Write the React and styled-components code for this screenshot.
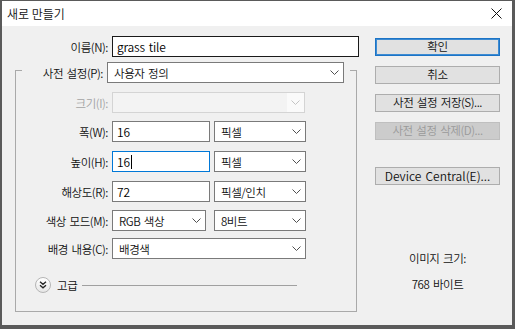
import styled, { createGlobalStyle } from "styled-components";

const GlobalStyle = createGlobalStyle`
  html, body {
    margin: 0;
    padding: 0;
    background: #595959;
  }
  body {
    font-family: "Noto Sans CJK KR", "Noto Sans", sans-serif;
    font-size: 11.5px;
    font-weight: 350;
    letter-spacing: -0.45px;
    word-spacing: 1.5px;
    color: #111;
  }
`;

function Chevron({ disabled }) {
    return (
        <svg width="9" height="5" viewBox="0 0 9 5">
            <polyline
                points="0.5,0.5 4.5,4.5 8.5,0.5"
                fill="none"
                stroke={disabled ? "#c4c4c4" : "#505050"}
                strokeWidth="1"
            />
        </svg>
    );
}

function SelectBox({ width, children, disabled }) {
    return (
        <Select $w={width} $disabled={disabled}>
            <SelectText>{children}</SelectText>
            <ChevronZone $disabled={disabled}>
                <Chevron disabled={disabled} />
            </ChevronZone>
        </Select>
    );
}

function App() {
    return (
        <>
            <GlobalStyle />
            <Window>
                <TitleBar>
                    <Title>새로 만들기</Title>
                    <CloseButton>
                        <svg width="11" height="11" viewBox="0 0 11 11">
                            <path d="M0.5 0.5 L10.5 10.5 M10.5 0.5 L0.5 10.5" stroke="#111" strokeWidth="1" />
                        </svg>
                    </CloseButton>
                </TitleBar>
                <Body>
                    <FormColumn>
                        <Row>
                            <Label $w={106}>이름(N):</Label>
                            <TextInput $w={247} $border="#1a1a1a">grass tile</TextInput>
                        </Row>
                        <Group>
                            <Legend>
                                <Label $w={81}>사전 설정(P):</Label>
                                <SelectBox width={237}>사용자 정의</SelectBox>
                            </Legend>
                            <Row>
                                <Label $w={92} $disabled>크기(I):</Label>
                                <SelectBox width={193} disabled />
                            </Row>
                            <Row $mt={8}>
                                <Label $w={92}>폭(W):</Label>
                                <TextInput $w={98}>16</TextInput>
                                <Spacer $w={4} />
                                <SelectBox width={92}>픽셀</SelectBox>
                            </Row>
                            <Row $mt={9}>
                                <Label $w={92}>높이(H):</Label>
                                <TextInput $w={98} $border="#0078d7">16<Caret /></TextInput>
                                <Spacer $w={4} />
                                <SelectBox width={92}>픽셀</SelectBox>
                            </Row>
                            <Row $mt={9}>
                                <Label $w={92}>해상도(R):</Label>
                                <TextInput $w={98}>72</TextInput>
                                <Spacer $w={4} />
                                <SelectBox width={92}>픽셀/인치</SelectBox>
                            </Row>
                            <Row $mt={8}>
                                <Label $w={92}>색상 모드(M):</Label>
                                <SelectBox width={94}>RGB 색상</SelectBox>
                                <Spacer $w={8} />
                                <SelectBox width={92}>8비트</SelectBox>
                            </Row>
                            <Row $mt={7}>
                                <Label $w={92}>배경 내용(C):</Label>
                                <SelectBox width={194}>배경색</SelectBox>
                            </Row>
                            <AdvancedRow>
                                <RoundToggle>
                                    <svg width="8" height="8" viewBox="0 0 8 8">
                                        <path d="M1 0.8 L4 3.3 L7 0.8 M1 4.3 L4 6.8 L7 4.3" fill="none" stroke="#222" strokeWidth="1.3" />
                                    </svg>
                                </RoundToggle>
                                <AdvancedText>고급</AdvancedText>
                                <Rule />
                            </AdvancedRow>
                        </Group>
                    </FormColumn>
                    <ButtonColumn>
                        <ButtonStack>
                            <Button $primary>확인</Button>
                            <Button>취소</Button>
                            <Button>사전 설정 저장(S)...</Button>
                            <Button disabled>사전 설정 삭제(D)...</Button>
                        </ButtonStack>
                        <Button $mt={27} $latin>Device Central(E)...</Button>
                        <ImageSize>
                            <span>이미지 크기:</span>
                            <span>768 바이트</span>
                        </ImageSize>
                    </ButtonColumn>
                </Body>
            </Window>
        </>
    );
}

export default App;

const Window = styled.div`
  width: 515px;
  height: 329px;
  box-sizing: border-box;
  border-style: solid;
  border-color: #5a5a5a;
  border-width: 1px 3px 4px 2px;
  background: #f0f0f0;
  display: flex;
  flex-direction: column;
  overflow: hidden;
`;

const TitleBar = styled.div`
  height: 25px;
  background: #fff;
  display: flex;
  align-items: center;
  justify-content: space-between;
  padding: 0 9px 0 5px;
`;

const Title = styled.span`
  font-size: 12px;
  letter-spacing: 0;
  word-spacing: 0;
  color: #111;
  line-height: 25px;
`;

const CloseButton = styled.div`
  width: 14px;
  height: 14px;
  display: flex;
  align-items: center;
  justify-content: center;
`;

const Body = styled.div`
  flex: 1;
  display: flex;
  padding-top: 10px;
`;

const FormColumn = styled.div`
  width: 357px;
  display: flex;
  flex-direction: column;
`;

const Row = styled.div`
  display: flex;
  align-items: center;
  height: 21px;
  margin-top: ${(p) => p.$mt || 0}px;
`;

const Label = styled.span`
  width: ${(p) => p.$w}px;
  margin-right: 4px;
  text-align: right;
  white-space: nowrap;
  color: ${(p) => (p.$disabled ? "#a3a3a3" : "#111")};
`;

const Spacer = styled.span`
  width: ${(p) => p.$w}px;
  flex: none;
`;

const TextInput = styled.div`
  width: ${(p) => p.$w}px;
  height: 21px;
  box-sizing: border-box;
  border: 1px solid ${(p) => p.$border || "#7a7a7a"};
  background: #fff;
  display: flex;
  align-items: center;
  padding-left: 4px;
  font-size: 12px;
  letter-spacing: -0.2px;
  color: #000;
  flex: none;
  white-space: pre;
`;

const Caret = styled.span`
  display: inline-block;
  width: 1px;
  height: 14px;
  background: #000;
  margin-left: 1px;
`;

const Select = styled.div`
  width: ${(p) => p.$w}px;
  height: 21px;
  box-sizing: border-box;
  border: 1px solid ${(p) => (p.$disabled ? "#d4d4d4" : "#7a7a7a")};
  background: ${(p) => (p.$disabled ? "#f3f3f3" : "#fff")};
  display: flex;
  align-items: center;
  flex: none;
`;

const SelectText = styled.span`
  flex: 1;
  padding-left: 6px;
  white-space: nowrap;
  overflow: hidden;
`;

const ChevronZone = styled.span`
  width: 17px;
  height: 100%;
  display: flex;
  align-items: center;
  justify-content: center;
  background: ${(p) => (p.$disabled ? "#fafafa" : "transparent")};
`;

const Group = styled.fieldset`
  margin: 0 0 0 13px;
  width: 342px;
  box-sizing: border-box;
  border: 1px solid #a9a9a9;
  padding: 9px 0 18px 0;
  min-width: 0;
`;

const Legend = styled.legend`
  margin-left: 6px;
  padding: 5px 6px 0 0;
  display: flex;
  align-items: center;
  height: 21px;
`;

const AdvancedRow = styled.div`
  display: flex;
  align-items: center;
  height: 16px;
  margin-top: 18px;
  padding-left: 19px;
`;

const RoundToggle = styled.div`
  width: 16px;
  height: 16px;
  box-sizing: border-box;
  border-radius: 50%;
  border: 1px solid #b5b5b5;
  background: linear-gradient(#ffffff, #e6e6e6);
  display: flex;
  align-items: center;
  justify-content: center;
  flex: none;
`;

const AdvancedText = styled.span`
  margin-left: 6px;
  color: #111;
`;

const Rule = styled.div`
  flex: 1;
  height: 1px;
  background: #a0a0a0;
  margin: 0 59px 0 5px;
`;

const ButtonColumn = styled.div`
  margin-left: 16px;
  width: 125px;
  display: flex;
  flex-direction: column;
  padding-top: 2px;
`;

const ButtonStack = styled.div`
  display: flex;
  flex-direction: column;
  gap: 10px;
`;

const Button = styled.button`
  width: 125px;
  height: 18px;
  margin-top: ${(p) => p.$mt || 0}px;
  box-sizing: border-box;
  padding: 0;
  font-family: inherit;
  font-weight: inherit;
  font-size: ${(p) => (p.$latin ? "12px" : "11.5px")};
  letter-spacing: ${(p) => (p.$latin ? "0" : "-0.45px")};
  word-spacing: inherit;
  line-height: 1;
  color: #111;
  background: #e1e1e1;
  border: 1px solid ${(p) => (p.$primary ? "#1c74c6" : "#adadad")};
  box-shadow: ${(p) => (p.$primary ? "inset 0 0 0 1px #3d8bd2" : "none")};
  display: flex;
  align-items: center;
  justify-content: center;

  &:disabled {
    background: #cccccc;
    border-color: #bfbfbf;
    color: #9a9a9a;
  }
`;

const ImageSize = styled.div`
  margin-top: 65px;
  display: flex;
  flex-direction: column;
  align-items: center;
  gap: 10px;
  color: #111;
`;
